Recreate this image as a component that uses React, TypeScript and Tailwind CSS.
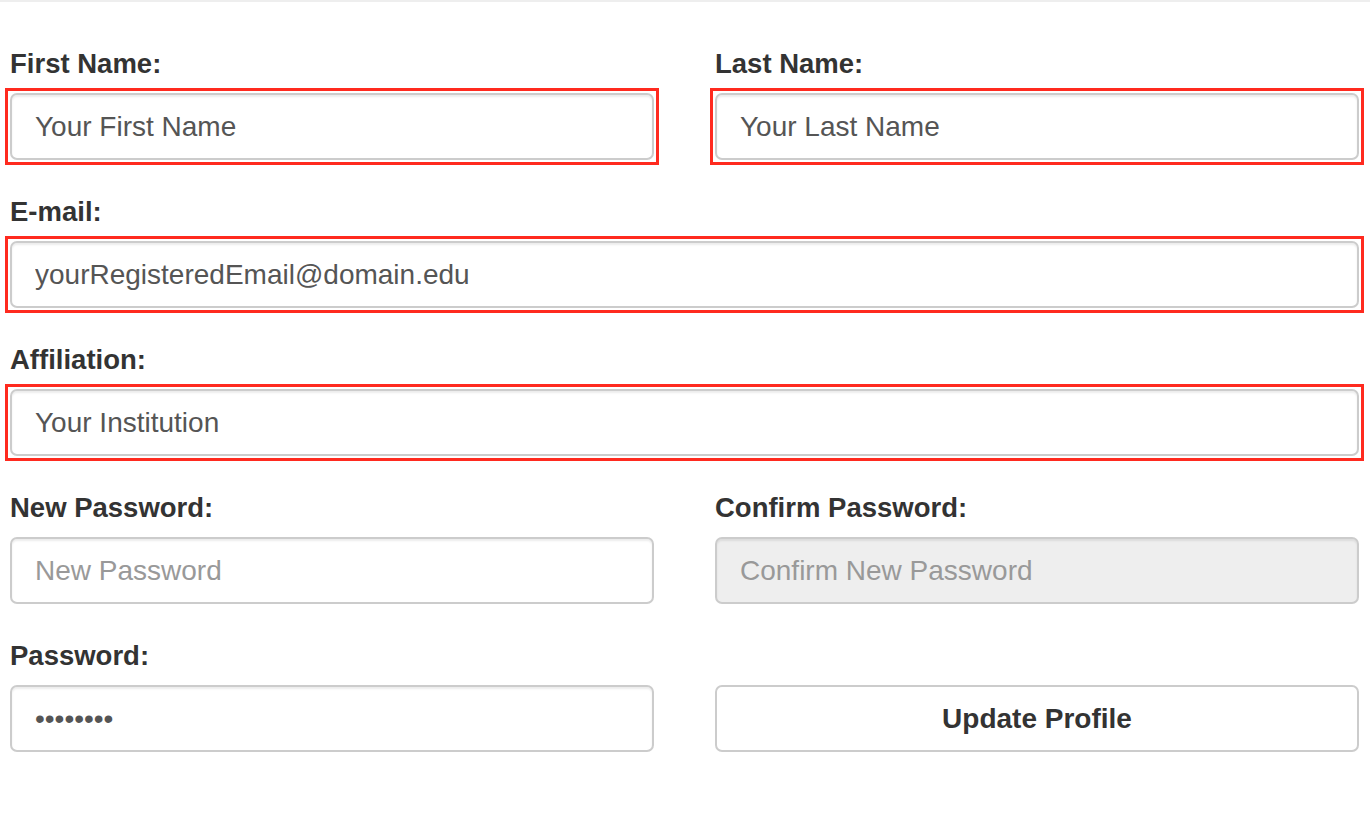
import React from "react";

const labelCls = "block text-[27.5px] leading-[30px] font-bold text-[#333] mb-[14px]";
const inputCls =
  "block w-full h-[67px] rounded-[7px] border-2 border-[#cccccc] px-[23px] text-[28px] text-[#555] shadow-[inset_0_2px_2px_rgba(0,0,0,0.075)] placeholder:text-[#999] outline-none";

function Field({
  label,
  value,
  placeholder,
  type = "text",
  flagged = false,
  disabled = false,
}: {
  label: string;
  value?: string;
  placeholder?: string;
  type?: string;
  flagged?: boolean;
  disabled?: boolean;
}) {
  const input = (
    <input
      type={type}
      defaultValue={value}
      placeholder={placeholder}
      disabled={disabled}
      className={inputCls + (disabled ? " bg-[#eeeeee]" : " bg-white")}
    />
  );
  return (
    <div>
      <label className={labelCls}>{label}</label>
      {flagged ? (
        <div className="-m-[5px] border-[3px] border-[#ff2a1f] p-[2px]">{input}</div>
      ) : (
        input
      )}
    </div>
  );
}

export default function App() {
  return (
    <div className="min-h-[820px] bg-white" style={{ fontFamily: '"Liberation Sans", Arial, sans-serif' }}>
      <div className="h-[2px] bg-[#eeeeee]" />
      <form className="pl-[10px] pt-[47px] w-[1370px]">
        <div className="grid w-[1349px] grid-cols-2 gap-x-[61px] gap-y-[37px]">
          <Field label="First Name:" value="Your First Name" flagged />
          <Field label="Last Name:" value="Your Last Name" flagged />
          <div className="col-span-2">
            <Field label="E-mail:" value="yourRegisteredEmail@domain.edu" flagged />
          </div>
          <div className="col-span-2">
            <Field label="Affiliation:" value="Your Institution" flagged />
          </div>
          <Field label="New Password:" placeholder="New Password" type="password" />
          <Field label="Confirm Password:" placeholder="Confirm New Password" type="password" disabled />
          <Field label="Password:" value="password" type="password" />
          <div className="flex flex-col justify-end">
            <button
              type="button"
              className="h-[67px] w-full rounded-[7px] border-2 border-[#cccccc] bg-white text-[28px] font-bold text-[#333]"
            >
              Update Profile
            </button>
          </div>
        </div>
      </form>
    </div>
  );
}
